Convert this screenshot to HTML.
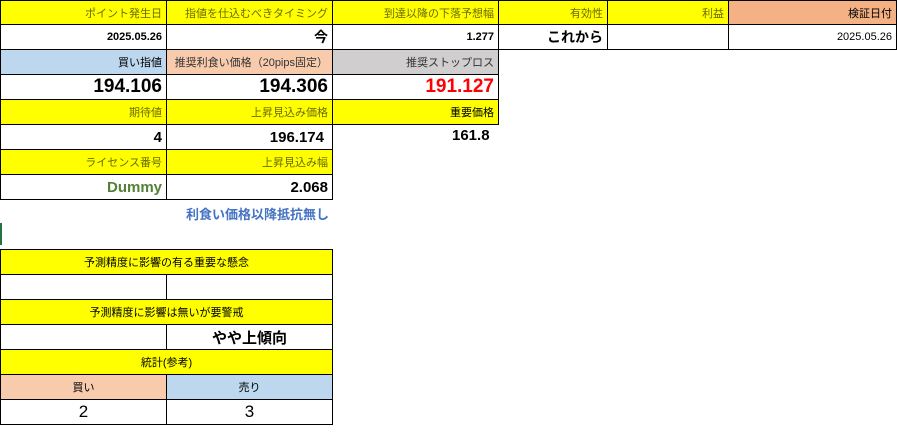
<!DOCTYPE html>
<html><head><meta charset="utf-8"><style>
body{margin:0;width:897px;height:441px;background:#fff;position:relative;overflow:hidden;font-family:"Liberation Sans","Noto Sans CJK JP",sans-serif;}
.c{position:absolute;box-sizing:border-box;border:1px solid #000;display:flex;align-items:center;justify-content:flex-end;padding-right:4px;font-size:11px;color:#000;white-space:nowrap;}
.y{background:#ffff00;color:#6b6b00;}
.ce{justify-content:center;padding:0;color:#000;}
.b{font-weight:bold;}
.big{font-size:19px;font-weight:bold;}
.mid{font-size:15px;font-weight:bold;}
.t{position:absolute;white-space:nowrap;}
</style></head><body>
<!-- row 0 -->
<div class="c y" style="left:0;top:0;width:167px;height:25px">ポイント発生日</div>
<div class="c y" style="left:166;left:166px;top:0;width:167px;height:25px">指値を仕込むべきタイミング</div>
<div class="c y" style="left:332px;top:0;width:167px;height:25px">到達以降の下落予想幅</div>
<div class="c y" style="left:498px;top:0;width:110px;height:25px">有効性</div>
<div class="c y" style="left:607px;top:0;width:122px;height:25px">利益</div>
<div class="c" style="left:728px;top:0;width:169px;height:25px;background:#f4b183">検証日付</div>
<!-- row 1 -->
<div class="c b" style="left:0;top:24px;width:167px;height:26px">2025.05.26</div>
<div class="c mid" style="left:166px;top:24px;width:167px;height:26px;font-size:14px">今</div>
<div class="c b" style="left:332px;top:24px;width:167px;height:26px">1.277</div>
<div class="c mid" style="left:498px;top:24px;width:110px;height:26px;font-size:14px">これから</div>
<div class="c" style="left:607px;top:24px;width:122px;height:26px"></div>
<div class="c" style="left:728px;top:24px;width:169px;height:26px">2025.05.26</div>
<!-- row 2 -->
<div class="c" style="left:0;top:49px;width:167px;height:26px;background:#bdd7ee">買い指値</div>
<div class="c" style="left:166px;top:49px;width:167px;height:26px;background:#f8cbad;color:#333">推奨利食い価格（20pips固定）</div>
<div class="c" style="left:332px;top:49px;width:167px;height:26px;background:#d0cece;color:#333">推奨ストップロス</div>
<!-- row 3 -->
<div class="c big" style="left:0;top:74px;width:167px;height:26px">194.106</div>
<div class="c big" style="left:166px;top:74px;width:167px;height:26px">194.306</div>
<div class="c big" style="left:332px;top:74px;width:167px;height:26px;color:#ff0000">191.127</div>
<!-- row 4 -->
<div class="c y" style="left:0;top:99px;width:167px;height:26px">期待値</div>
<div class="c y" style="left:166px;top:99px;width:167px;height:26px">上昇見込み価格</div>
<div class="c y" style="left:332px;top:99px;width:167px;height:26px;color:#000">重要価格</div>
<!-- row 5 -->
<div class="c mid" style="left:0;top:124px;width:167px;height:26px">4</div>
<div class="c mid" style="left:166px;top:124px;width:167px;height:26px;padding-right:8px">196.174</div>
<div class="t mid" style="left:452px;top:127px">161.8</div>
<!-- row 6 -->
<div class="c y" style="left:0;top:149px;width:167px;height:26px">ライセンス番号</div>
<div class="c y" style="left:166px;top:149px;width:167px;height:26px">上昇見込み幅</div>
<!-- row 7 -->
<div class="c mid" style="left:0;top:174px;width:167px;height:26px;color:#538135">Dummy</div>
<div class="c mid" style="left:166px;top:174px;width:167px;height:26px">2.068</div>
<div class="t b" style="left:186px;top:204px;font-size:13px;color:#4472c4">利食い価格以降抵抗無し</div>
<div style="position:absolute;left:0;top:223px;width:2px;height:22px;background:#217346"></div>
<!-- lower -->
<div class="c y ce" style="left:0;top:249px;width:333px;height:26px">予測精度に影響の有る重要な懸念</div>
<div class="c" style="left:0;top:274px;width:167px;height:26px"></div>
<div class="c" style="left:166px;top:274px;width:167px;height:26px"></div>
<div class="c y ce" style="left:0;top:299px;width:333px;height:26px">予測精度に影響は無いが要警戒</div>
<div class="c" style="left:0;top:324px;width:167px;height:26px"></div>
<div class="c ce mid" style="left:166px;top:324px;width:167px;height:26px">やや上傾向</div>
<div class="c y ce" style="left:0;top:349px;width:333px;height:26px">統計(参考)</div>
<div class="c ce" style="left:0;top:374px;width:167px;height:26px;background:#f8cbad">買い</div>
<div class="c ce" style="left:166px;top:374px;width:167px;height:26px;background:#bdd7ee">売り</div>
<div class="c ce" style="left:0;top:399px;width:167px;height:26px;font-size:17px">2</div>
<div class="c ce" style="left:166px;top:399px;width:167px;height:26px;font-size:17px">3</div>
</body></html>
